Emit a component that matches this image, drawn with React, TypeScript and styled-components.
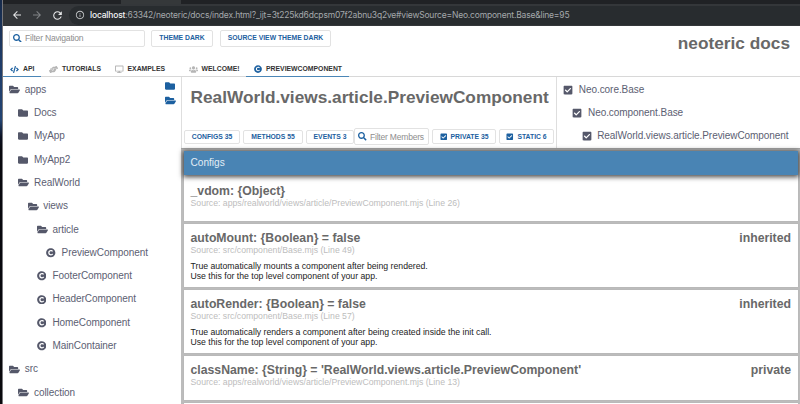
import React from "react";
import styled, { createGlobalStyle } from "styled-components";
import {
  FaCheckSquare, FaCode, FaCopyright, FaDesktop, FaFolder, FaFolderOpen,
  FaHandsHelping, FaSearch, FaUsers,
} from "react-icons/fa";
import { MdArrowBack, MdArrowForward, MdRefresh, MdInfoOutline } from "react-icons/md";

const Global = createGlobalStyle`
  * { box-sizing: border-box; }
  body { margin: 0; overflow: hidden; font-family: "Liberation Sans", Arial, sans-serif; }
  svg { display: block; flex: none; }
  h1, h2, h3, p { margin: 0; }
`;

const Screen = styled.div`
  display: flex; width: 800px; height: 404px; overflow: hidden; background: #fff;
`;
const DesktopEdge = styled.div`
  flex: none; width: 3px; border-right: 1px solid #77777b;
  background: linear-gradient(#172b4b 0, #1f3c68 60px, #234473 120px, #0b1122 137px, #08080d 150px, #09090d 100%);
`;
const Browser = styled.div`
  flex: none; width: 797px; height: 404px; display: flex; flex-direction: column; overflow: hidden;
`;

const TabStrip = styled.div`
  flex: none; height: 4px; background: #202225; padding-left: 118px;
`;
const ActiveTab = styled.div`
  width: 60px; height: 4px; background: #35383a;
`;
const Toolbar = styled.div`
  flex: none; height: 22px; display: flex; align-items: center; background: #34373a; color: #e6e7e8; padding-left: 8px;
`;
const NavIcons = styled.div`
  display: flex; align-items: center; gap: 8px; width: 58px;
`;
const DimIcon = styled.span`color: #808386;`;
const AddressBar = styled.div`
  flex: 1; height: 19px; border-radius: 10px 0 0 10px; background: #282c2f;
  display: flex; align-items: center; gap: 5px; padding: 0 0 0 6px; color: #c3c6c8;
`;
const Url = styled.span`
  font: 8.5px/12px "Inter", sans-serif; letter-spacing: -0.185px; color: #a4a8ab; white-space: nowrap;
`;
const Host = styled.span`color: #f2f3f4; font-weight: 500;`;

const Header = styled.header`
  flex: none; height: 51px; display: flex; flex-direction: column; justify-content: space-between;
`;
const HeaderTop = styled.div`
  display: flex; align-items: flex-start; height: 28px; padding: 3.5px 10px 0 6px;
`;
const SearchBox = styled.div<{ $w: number }>`
  width: ${p => p.$w}px; height: 17px; flex: none; display: flex; align-items: center; gap: 3.5px;
  border: 1px solid #e2e2e2; border-radius: 2px; padding-left: 3px; color: #1c60a0;
`;
const Placeholder = styled.span<{ $size: number; $spacing?: number }>`
  font-size: ${p => p.$size}px; letter-spacing: ${p => p.$spacing ?? 0}px;
  line-height: 12px; color: #8e8e8e; white-space: nowrap;
`;
const Button = styled.button<{ $w: number; $h?: number; $ml?: number; $size?: number }>`
  flex: none; width: ${p => p.$w}px; height: ${p => p.$h ?? 17}px; margin: 0 0 0 ${p => p.$ml ?? 0}px; padding: 0;
  display: flex; align-items: center; justify-content: center; gap: 3.5px;
  background: #fff; border: 1px solid #e2e2e2; border-radius: 2px;
  font: bold ${p => p.$size ?? 6.8}px/10px "Liberation Sans", Arial, sans-serif; color: #1c60a0; white-space: nowrap;
`;
const Brand = styled.h1`
  margin-left: auto; font-size: 17.25px; line-height: 20px; color: #686868; padding-top: 3.3px; white-space: nowrap;
`;
const TabRow = styled.nav`
  display: flex; height: 17px; border-bottom: 1px solid #d8d8d8;
`;
const Tab = styled.div<{ $w: number; $active?: boolean; $pad: number; $gap?: number }>`
  flex: none; width: ${p => p.$w}px; height: 17px; padding: 2px 0 0 ${p => p.$pad}px;
  display: flex; align-items: center; gap: ${p => p.$gap ?? 4}px;
  border-bottom: ${p => (p.$active ? "1.5px solid #4b86b6" : "1px solid transparent")};
  font-size: 6.85px; font-weight: bold; line-height: 10px; color: #333; white-space: nowrap;
  svg { color: ${p => (p.$active ? "#1c60a0" : "#b5b5b5")}; }
`;

const Body = styled.div`flex: 1; display: flex; min-height: 0;`;
const Sidebar = styled.aside`
  flex: none; width: 178px; display: flex; justify-content: space-between; padding: 1px 5px 0 6px;
`;
const Tree = styled.ul`list-style: none; margin: 0; padding: 0;`;
const TreeItem = styled.li<{ $depth: number }>`
  height: 23.32px; padding-left: ${p => p.$depth * 9.2}px; display: flex; align-items: center;
  font-size: 10px; letter-spacing: -0.06px; line-height: 14px; color: #5c6072; white-space: nowrap;
`;
const TreeIcon = styled.span`width: 15.8px; padding-left: 0.3px; color: #55586a;`;
const FolderTools = styled.div`
  display: flex; flex-direction: column; gap: 4.5px; padding-top: 2.5px; color: #1c60a0;
`;

const Main = styled.main`
  flex: 1; min-width: 0; display: flex; flex-direction: column;
`;
const Summary = styled.section`flex: none; height: 71px; display: flex;`;
const TitlePanel = styled.div`
  flex: none; width: 376px; border: solid #dedede; border-width: 0 1px;
  display: flex; flex-direction: column; justify-content: space-between; padding: 9px 0 4px 2px;
`;
const ClassTitle = styled.h2`
  font-size: 17.25px; line-height: 22px; color: #686868; padding-left: 6.5px; white-space: nowrap;
`;
const Filters = styled.div`display: flex; align-items: center; height: 15px;`;
const Hierarchy = styled.div`padding: 1px 0 0 6px;`;

const Members = styled.section`
  flex: 1; min-height: 0; background: #bcbcbc; padding: 2px 2px 0 3px; border-top: 1px solid #a8a8a8;
`;
const GroupHeader = styled.h3`
  position: relative; height: 24px; background: #4984b4; color: #e2edf5;
  font-size: 10.1px; font-weight: normal; line-height: 24px; padding-left: 6.5px;
  box-shadow: 0 1px 5px 1px rgba(0, 0, 0, 0.72);
`;
const Member = styled.article<{ $h: number; $top?: number }>`
  height: ${p => p.$h}px; margin-bottom: 3px; background: #fff; padding: ${p => p.$top ?? 7}px 7px 0 6.5px;
  box-shadow: 0 0 1px #aaa;
`;
const MemberHead = styled.div`
  display: flex; justify-content: space-between; font-size: 12.25px; font-weight: bold; line-height: 14px; color: #686868; white-space: nowrap;
`;
const Source = styled.div`
  font-size: 8.7px; line-height: 10px; color: #bdbdbd; white-space: nowrap;
`;
const Description = styled.p`
  margin-top: 6px; font-size: 8.7px; line-height: 10px; color: #222; white-space: nowrap;
`;

type NodeKind = "open" | "closed" | "class" | "check";
const nodes: [string, number, NodeKind][] = [
  ["apps", 0, "open"], ["Docs", 1, "closed"], ["MyApp", 1, "closed"], ["MyApp2", 1, "closed"],
  ["RealWorld", 1, "open"], ["views", 2, "open"], ["article", 3, "open"], ["PreviewComponent", 4, "class"],
  ["FooterComponent", 3, "class"], ["HeaderComponent", 3, "class"], ["HomeComponent", 3, "class"],
  ["MainContainer", 3, "class"], ["src", 0, "open"], ["collection", 1, "open"],
];
const hierarchy = ["Neo.core.Base", "Neo.component.Base", "RealWorld.views.article.PreviewComponent"];

const icons = {
  open: <FaFolderOpen size={11} />,
  closed: <FaFolder size={10} />,
  class: <FaCopyright size={9.5} />,
  check: <FaCheckSquare size={10} />,
};

function TreeNode({ text, depth, kind }: { text: string; depth: number; kind: NodeKind }) {
  return (
    <TreeItem $depth={depth}>
      <TreeIcon>{icons[kind]}</TreeIcon>{text}
    </TreeItem>
  );
}

const members = [
  { name: "_vdom: {Object}", source: "apps/realworld/views/article/PreviewComponent.mjs (Line 26)", h: 45.7, top: 9 },
  { name: "autoMount: {Boolean} = false", flag: "inherited", source: "src/component/Base.mjs (Line 49)", h: 63.3,
    text: ["True automatically mounts a component after being rendered.", "Use this for the top level component of your app."] },
  { name: "autoRender: {Boolean} = false", flag: "inherited", source: "src/component/Base.mjs (Line 57)", h: 63.3,
    text: ["True automatically renders a component after being created inside the init call.", "Use this for the top level component of your app."] },
  { name: "className: {String} = 'RealWorld.views.article.PreviewComponent'", flag: "private",
    source: "apps/realworld/views/article/PreviewComponent.mjs (Line 13)", h: 43.5 },
];

export default function App() {
  return (
    <Screen>
      <Global />
      <DesktopEdge />
      <Browser>
        <TabStrip><ActiveTab /></TabStrip>
        <Toolbar>
          <NavIcons>
            <MdArrowBack size={12} />
            <DimIcon><MdArrowForward size={12} /></DimIcon>
            <MdRefresh size={13} />
          </NavIcons>
          <AddressBar>
            <MdInfoOutline size={10} />
            <Url>
              <Host>localhost</Host>:63342/neoteric/docs/index.html?_ijt=3t225kd6dcpsm07f2abnu3q2ve#viewSource=Neo.component.Base&amp;line=95
            </Url>
          </AddressBar>
        </Toolbar>
        <Header>
          <HeaderTop>
            <SearchBox $w={136}><FaSearch size={8.5} /><Placeholder $size={8.6} $spacing={-0.22}>Filter Navigation</Placeholder></SearchBox>
            <Button $w={62} $ml={6}>THEME DARK</Button>
            <Button $w={111} $ml={7}>SOURCE VIEW THEME DARK</Button>
            <Brand>neoteric docs</Brand>
          </HeaderTop>
          <TabRow>
            <Tab $w={38} $pad={7} $active><FaCode size={9} />API</Tab>
            <Tab $w={66} $pad={8}><FaHandsHelping size={9} />TUTORIALS</Tab>
            <Tab $w={74} $pad={8}><FaDesktop size={8.5} />EXAMPLES</Tab>
            <Tab $w={65} $pad={7.5}><FaUsers size={9} />WELCOME!</Tab>
            <Tab $w={103} $pad={8} $active><FaCopyright size={8} />PREVIEWCOMPONENT</Tab>
          </TabRow>
        </Header>
        <Body>
          <Sidebar>
            <Tree>
              {nodes.map(([text, depth, kind]) => <TreeNode key={text} text={text} depth={depth} kind={kind} />)}
            </Tree>
            <FolderTools><FaFolder size={10} /><FaFolderOpen size={11} /></FolderTools>
          </Sidebar>
          <Main>
            <Summary>
              <TitlePanel>
                <ClassTitle>RealWorld.views.article.PreviewComponent</ClassTitle>
                <Filters>
                  <Button $w={56} $h={14}>CONFIGS 35</Button>
                  <Button $w={60} $h={14} $ml={3}>METHODS 55</Button>
                  <Button $w={48} $h={14} $ml={3}>EVENTS 3</Button>
                  <SearchBox $w={75}><FaSearch size={8.5} /><Placeholder $size={8.5} $spacing={-0.2}>Filter Members</Placeholder></SearchBox>
                  <Button $w={64} $h={15} $ml={3}><FaCheckSquare size={7.5} />PRIVATE 35</Button>
                  <Button $w={55} $h={15} $ml={3}><FaCheckSquare size={7.5} />STATIC 6</Button>
                </Filters>
              </TitlePanel>
              <Hierarchy>
                <Tree>
                  {hierarchy.map((text, i) => <TreeNode key={text} text={text} depth={i} kind="check" />)}
                </Tree>
              </Hierarchy>
            </Summary>
            <Members>
              <GroupHeader>Configs</GroupHeader>
              {members.map(m => (
                <Member key={m.name} $h={m.h} $top={m.top}>
                  <MemberHead><span>{m.name}</span><span>{m.flag}</span></MemberHead>
                  <Source>Source: {m.source}</Source>
                  {m.text && <Description>{m.text[0]}<br />{m.text[1]}</Description>}
                </Member>
              ))}
              <Member $h={20} />
            </Members>
          </Main>
        </Body>
      </Browser>
    </Screen>
  );
}
